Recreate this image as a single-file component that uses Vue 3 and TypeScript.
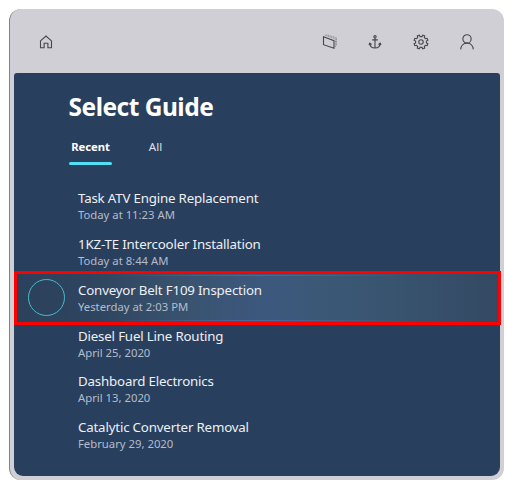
<script setup lang="ts">
import { ref } from 'vue'

interface Guide {
  title: string
  date: string
}

const tabs: string[] = ['Recent', 'All']
const activeTab = ref('Recent')
const selected = ref(2)

const guides: Guide[] = [
  { title: 'Task ATV Engine Replacement', date: 'Today at 11:23 AM' },
  { title: '1KZ-TE Intercooler Installation', date: 'Today at 8:44 AM' },
  { title: 'Conveyor Belt F109 Inspection', date: 'Yesterday at 2:03 PM' },
  { title: 'Diesel Fuel Line Routing', date: 'April 25, 2020' },
  { title: 'Dashboard Electronics', date: 'April 13, 2020' },
  { title: 'Catalytic Converter Removal', date: 'February 29, 2020' },
]
</script>

<template>
  <div class="page">
    <div class="window">
      <header class="toolbar">
        <svg class="icon home" viewBox="0 0 16 16">
          <path d="M2.500 6.900 8 2l5.500 4.900V13.700H9.900V9.300H6.100v4.400H2.500z" />
        </svg>
        <nav class="actions">
          <svg class="icon" viewBox="0 0 16 16">
            <path d="M1.500 2.700 12 6.700V14.200L1.500 10.700z" />
            <path class="dotted" d="M2.700 1.200 13.500 4.800V13M4.500.7 14.500 3.800V12" />
          </svg>
          <svg class="icon" viewBox="0 0 16 16">
            <circle cx="8" cy="2.800" r="1.150" />
            <path d="M8 4V14M5.200 5.900h5.600M2.800 9.300c.2 3 2.200 4.700 5.200 4.700s5-1.700 5.200-4.700M2 11l.8-1.800L4.500 10.500M14 11l-.8-1.800-1.700 1.300" />
          </svg>
          <svg class="icon" viewBox="0 0 16 16">
            <circle cx="8" cy="8" r="2.200" />
            <path d="M6.300 1.100 7 2.600h2L9.700 1.100 11.700 1.900 11.300 3.500 12.500 4.700 14.100 4.300 14.900 6.300 13.400 7v2l1.500.7-.8 2-1.600-.4-1.200 1.200.4 1.600-2 .8L9 13.400H7l-.7 1.500-2-.8.4-1.600-1.200-1.200-1.600.4-.8-2L2.600 9V7l-1.500-.7.8-2 1.600.4 1.200-1.200-.4-1.600z" />
          </svg>
          <svg class="icon" viewBox="0 0 16 16">
            <circle cx="8" cy="4.900" r="4.150" />
            <path d="M1.700 15.400C1.900 11.600 4.500 9.100 8 9.100s6.100 2.500 6.300 6.300" />
          </svg>
        </nav>
      </header>

      <main class="panel">
        <h1 class="heading">Select Guide</h1>
        <div class="tabs">
          <button
            v-for="tab in tabs"
            :key="tab"
            class="tab"
            :class="{ active: tab === activeTab }"
            @click="activeTab = tab"
          >{{ tab }}</button>
        </div>
        <ul class="guides">
          <li
            v-for="(guide, i) in guides"
            :key="guide.title"
            class="guide"
            :class="{ selected: i === selected }"
            @click="selected = i"
          >
            <span class="ring"></span>
            <div class="text">
              <span class="title">{{ guide.title }}</span>
              <span class="date">{{ guide.date }}</span>
            </div>
          </li>
        </ul>
      </main>
    </div>
  </div>
</template>

<style>
body {
  background: #fff;
}
</style>

<style scoped>
.page {
  box-sizing: border-box;
  width: 506px;
  height: 484px;
  padding: 9px 2px 4px 9px;
  overflow: hidden;
  background: #fff;
  font-family: 'Noto Sans', 'Open Sans', sans-serif;
}

.window {
  box-sizing: border-box;
  display: flex;
  flex-direction: column;
  height: 471px;
  padding: 0 4.500px 4.500px 4px;
  border-left: 1px solid #828286;
  border-radius: 12px;
  background: #d0cfd5;
}

.toolbar {
  box-sizing: border-box;
  display: flex;
  flex: 0 0 64px;
  justify-content: space-between;
  align-items: center;
  padding: 2px 24.500px 0 24px;
}

.icon {
  width: 16px;
  height: 16px;
  overflow: visible;
  fill: none;
  stroke: #46464b;
  stroke-width: 1.100;
}

.dotted {
  stroke: #77777c;
  stroke-dasharray: 1 0.700;
  stroke-width: 0.800;
}

.actions {
  display: flex;
  gap: 29.800px;
}

.panel {
  flex: 1;
  border-radius: 3px 3px 9px 9px;
  background: #293f5e;
}

.heading {
  margin: 17px 0 0 54.500px;
  color: #fff;
  font-size: 24.500px;
  font-weight: 700;
  letter-spacing: -0.500px;
  line-height: 34px;
  white-space: nowrap;
}

.tabs {
  display: flex;
  gap: 22px;
  margin: 14px 0 0 55px;
}

.tab {
  box-sizing: border-box;
  position: relative;
  width: 43px;
  height: 27px;
  padding: 0 0 9px;
  border: 0;
  background: none;
  color: #dfe4eb;
  font: 400 11.500px/18px 'Noto Sans', 'Open Sans', sans-serif;
  text-align: center;
}

.tab.active {
  color: #fff;
  font-size: 11.300px;
  font-weight: 700;
  letter-spacing: -0.100px;
}

.tab.active::after {
  position: absolute;
  right: 0;
  bottom: 0;
  left: 0;
  height: 3px;
  border-radius: 1.500px;
  background: #4fe0f5;
  content: '';
}

.guides {
  display: flex;
  flex-direction: column;
  margin: 18px 0 0;
  padding: 0;
  list-style: none;
}

.guide {
  position: relative;
  box-sizing: border-box;
  display: flex;
  gap: 14px;
  align-items: center;
  height: 45.800px;
  padding-left: 14px;
}

.guide:nth-child(5) {
  height: 45px;
}

.guide:nth-child(6) {
  height: 47.500px;
}

.ring {
  box-sizing: border-box;
  width: 37px;
  height: 37px;
  margin-right: -1px;
}

.text {
  position: relative;
  display: flex;
  flex-direction: column;
  white-space: nowrap;
}

.title {
  color: #edf0f4;
  font-size: 13.300px;
  letter-spacing: -0.180px;
  line-height: 18px;
}

.date {
  color: #b3bdcb;
  font-size: 11.300px;
  line-height: 15px;
}

.selected .ring {
  position: relative;
  z-index: 1;
  border: 1.500px solid #4bb9cd;
  border-radius: 50%;
}

/* Highlight band that spills slightly over the neighbouring rows */
.selected::before {
  position: absolute;
  inset: -4px -1px -5px 0;
  border: 3px solid #f00;
  background:
    linear-gradient(90deg, transparent 20%, #466da0 50%, transparent 82%) 0 1px / 100% 1px no-repeat,
    linear-gradient(90deg, transparent 20%, #466da0 50%, transparent 82%) 0 calc(100% - 1px) / 100% 1px no-repeat,
    linear-gradient(90deg, #2c415b 0%, #2e445f 15%, #39536f 35%, #3c587e 52%, #3b5877 63%, #38546f 78%, #344963 100%);
  content: '';
}
</style>
